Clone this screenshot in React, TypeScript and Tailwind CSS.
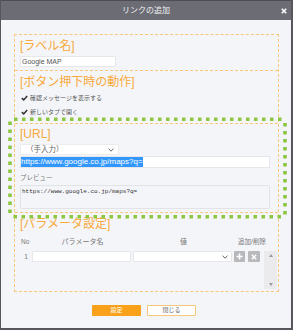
import React from "react";

const Check = () => (
  <svg width="7" height="6" viewBox="0 0 7 6" className="shrink-0">
    <path d="M0.8 3.1 L2.7 4.9 L6.2 0.9" fill="none" stroke="#333" strokeWidth="1.5" />
  </svg>
);

const Chevron = () => (
  <svg width="6" height="4" viewBox="0 0 6 4">
    <path d="M0.5 0.6 L3 3.2 L5.5 0.6" fill="none" stroke="#555" strokeWidth="0.9" />
  </svg>
);

export default function App() {
  return (
    <div className="relative w-[293px] h-[330px] flex flex-col bg-[#f4f5f9] border-l border-r-2 border-b-2 border-[#56565c] font-['Liberation_Sans','Noto_Sans_CJK_JP',sans-serif]">
      {/* Title bar */}
      <div className="h-[20px] shrink-0 grid grid-cols-[1fr_auto_1fr] items-center bg-[#6c6c75] border-t border-[#4c4c52]">
        <div />
        <div className="text-[8px] leading-[10px] text-[#f2f2f2]">リンクの追加</div>
        <div className="flex justify-end pr-[4px]">
          <svg width="6" height="6" viewBox="0 0 6 6">
            <path d="M0.8 0.8 L5.2 5.2 M5.2 0.8 L0.8 5.2" stroke="#fff" strokeWidth="1.6" />
          </svg>
        </div>
      </div>

      {/* Content */}
      <div className="flex-1 flex flex-col pt-[14px] pl-[13px] pr-[12px]">
        <div className="border border-dashed border-[#f8c77c] flex flex-col">
          {/* Label */}
          <div className="px-[5px] pt-[4px] pb-[3px] border-b border-dashed border-[#f8c77c]">
            <div className="text-[12px] leading-[14px] text-[#f8a93b]">[ラベル名]</div>
            <div className="mt-[3px] w-[96px] h-[11px] bg-white border border-[#e6e7eb] rounded-[1px] flex items-center pl-[1px] text-[7px] leading-[9px] text-[#555]">
              Google MAP
            </div>
          </div>

          {/* Action */}
          <div className="px-[5px] pt-[4px] pb-[4px] border-b border-dashed border-[#f8c77c]">
            <div className="text-[12px] leading-[14px] text-[#f8a93b]">[ボタン押下時の動作]</div>
            <div className="mt-[2px] h-[14px] flex items-center gap-[2px] pl-[1px] text-[6px] text-[#555]">
              <Check />
              <span>確認メッセージを表示する</span>
            </div>
            <div className="h-[14px] flex items-center gap-[2px] pl-[1px] text-[6px] text-[#555]">
              <Check />
              <span>新しいタブで開く</span>
            </div>
          </div>

          {/* URL */}
          <div className="px-[5px] pt-[3px] pb-[3px] border-b border-dashed border-[#f8c77c]">
            <div className="text-[12px] leading-[14px] text-[#f8a93b]">[URL]</div>
            <div className="mt-[3px] w-[99px] h-[11px] bg-white border border-[#ececef] flex items-center justify-between pl-[5px] pr-[4px] text-[7.5px] text-[#666]">
              <span>（手入力）</span>
              <Chevron />
            </div>
            <div className="mt-[1px] w-[250px] h-[12px] bg-white border border-[#e6e7eb] flex items-center">
              <span className="bg-[#3297fd] text-white text-[8px] leading-[10px]">https://www.google.co.jp/maps?q=</span>
            </div>
            <div className="mt-[6px] text-[6.5px] leading-[8px] text-[#777]">プレビュー</div>
            <div className="mt-[3px] w-[250px] h-[24px] border border-[#e2e3e7] rounded-[1px] pt-[2px] pl-[1px] font-['Liberation_Mono',monospace] text-[6px] leading-[8px] text-[#333]">
              https://www.google.co.jp/maps?q=
            </div>
          </div>

          {/* Params */}
          <div className="pl-[5px] pr-0 pt-[4px] pb-[2px]">
            <div className="text-[12px] leading-[14px] text-[#f8a93b]">[パラメータ設定]</div>
            <div className="mt-[7px] flex items-center h-[8px] text-[7px] leading-[8px] text-[#777]">
              <div className="w-[12px] shrink-0 pl-[1px] text-[6.5px]">No</div>
              <div className="w-[101px] shrink-0 text-center">パラメータ名</div>
              <div className="w-[101px] shrink-0 text-center">値</div>
              <div className="w-[36px] shrink-0 text-center text-[6.5px]">追加/削除</div>
            </div>
            <div className="mt-[5px] flex items-start">
              <div className="w-[12px] shrink-0 h-[11px] flex items-center justify-center text-[6.5px] text-[#777]">1</div>
              <div className="w-[99px] shrink-0 h-[11px] bg-white border border-[#e6e7eb] rounded-[1px]" />
              <div className="ml-[2px] w-[99px] shrink-0 h-[11px] bg-white border border-[#e6e7eb] rounded-[1px] flex items-center justify-end pr-[3px]">
                <Chevron />
              </div>
              <div className="ml-[2px] w-[11px] shrink-0 h-[11px] bg-[#b9b9bc] rounded-[1px] flex items-center justify-center">
                <svg width="7" height="7" viewBox="0 0 7 7">
                  <path d="M3.5 0.5 V6.5 M0.5 3.5 H6.5" stroke="#fff" strokeWidth="1.6" />
                </svg>
              </div>
              <div className="ml-[3px] w-[12px] shrink-0 h-[11px] bg-[#b9b9bc] rounded-[1px] flex items-center justify-center">
                <svg width="6" height="6" viewBox="0 0 6 6">
                  <path d="M0.8 0.8 L5.2 5.2 M5.2 0.8 L0.8 5.2" stroke="#fff" strokeWidth="1.5" />
                </svg>
              </div>
              <div className="ml-[4px] w-[13px] shrink-0 h-[38px] bg-[#ebebee] flex flex-col items-center justify-between py-[3px]">
                <svg width="4" height="3" viewBox="0 0 4 3"><path d="M0 3 L2 0 L4 3 Z" fill="#9a9a9a" /></svg>
                <svg width="4" height="3" viewBox="0 0 4 3"><path d="M0 0 L2 3 L4 0 Z" fill="#9a9a9a" /></svg>
              </div>
            </div>
          </div>
        </div>

        {/* Buttons */}
        <div className="mt-[13px] flex gap-[6px] pl-[78px]">
          <div className="w-[49px] h-[11px] bg-[#f9a11b] rounded-[1px] flex items-center justify-center text-[6px] text-white">設定</div>
          <div className="w-[49px] h-[11px] bg-white border border-[#f8c77c] rounded-[1px] flex items-center justify-center text-[6px] text-[#666]">閉じる</div>
        </div>
      </div>

      {/* Green highlight overlay */}
      <svg className="absolute left-[-1px] top-0 pointer-events-none" width="293" height="330" viewBox="0 0 293 330">
        <g fill="none" stroke="#8dc63f" strokeWidth="3.6" strokeDasharray="3.5 4.5">
          <path d="M14 119.3 H284" />
          <path d="M285 123 V215" />
          <path d="M281 216.8 H12" />
          <path d="M10 213 V121" />
        </g>
      </svg>
    </div>
  );
}
